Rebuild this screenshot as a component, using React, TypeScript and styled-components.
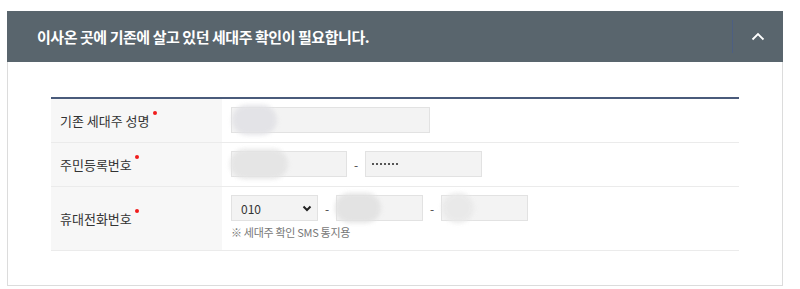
import styled, { createGlobalStyle } from "styled-components";

const GlobalStyle = createGlobalStyle`
  html, body {
    margin: 0;
    padding: 0;
    background: #fff;
    font-family: "Noto Sans CJK KR", "Noto Sans", sans-serif;
  }
`;

const Panel = styled.section`
  margin: 11px 0 0 7px;
  width: 776px;
  border: 1px solid #dcdcdc;
  border-top: 0;
  box-sizing: border-box;
  background: #fff;
`;

const Header = styled.header`
  height: 51px;
  background: #59656d;
  display: flex;
  align-items: center;
  padding-left: 30px;
  margin: 0 -1px;
`;

const Title = styled.h2`
  flex: 1;
  margin: 0;
  color: #fff;
  font-size: 15px;
  font-weight: 700;
  letter-spacing: -0.45px;
`;

const Toggle = styled.button`
  width: 50px;
  height: 33px;
  border: 0;
  border-left: 1px solid #4c5f82;
  background: transparent;
  display: flex;
  align-items: center;
  justify-content: center;
  padding: 0;
  margin-right: 1px;
  cursor: pointer;
`;

const Body = styled.div`
  padding: 35px 43px 34px 43px;
`;

const Table = styled.div`
  border-top: 2px solid #4a5b7b;
`;

const Row = styled.div<{ $h: number }>`
  display: grid;
  grid-template-columns: 171px 1fr;
  height: ${({ $h }) => $h}px;
  box-sizing: border-box;
  border-bottom: 1px solid #ebebeb;
`;

const Label = styled.div`
  background: #f7f7f7;
  display: flex;
  align-items: center;
  padding-left: 9px;
  font-size: 13px;
  color: #333;
`;

const Req = styled.span`
  display: inline-block;
  width: 4px;
  height: 4px;
  border-radius: 50%;
  background: #f01c1c;
  margin-left: 3px;
  position: relative;
  top: -8px;
`;

const Cell = styled.div`
  padding: 8px 0 0 9px;
`;

const Line = styled.div`
  display: flex;
  align-items: center;
`;

const Field = styled.div<{ $w: number }>`
  position: relative;
  width: ${({ $w }) => $w}px;
  height: 26px;
  box-sizing: border-box;
  background: #f3f3f3;
  border: 1px solid #e2e2e2;
  font-size: 12px;
  color: #333;
  display: flex;
  align-items: center;
  padding-left: 9px;
`;

const Dots = styled.span`
  display: flex;
  gap: 1.6px;
  margin-left: -3px;
`;

const Dot = styled.i`
  width: 2.4px;
  height: 2.4px;
  border-radius: 50%;
  background: #222;
`;

const Dash = styled.span`
  width: 18px;
  text-align: center;
  font-size: 12px;
  color: #444;
`;

const Chevron = styled.svg`
  position: absolute;
  right: 5px;
  top: 9px;
`;

const Blur = styled.div<{ $l: number; $w: number; $c: string }>`
  position: absolute;
  left: ${({ $l }) => $l}px;
  top: -3px;
  width: ${({ $w }) => $w}px;
  height: 30px;
  border-radius: 15px;
  background: ${({ $c }) => $c};
  filter: blur(2px);
  opacity: 0.9;
`;

const Note = styled.p`
  margin: 3px 0 0 0;
  font-size: 11px;
  color: #777;
  letter-spacing: -0.3px;
`;

export default function App() {
  return (
    <>
      <GlobalStyle />
      <Panel>
        <Header>
          <Title>이사온 곳에 기존에 살고 있던 세대주 확인이 필요합니다.</Title>
          <Toggle aria-label="접기">
            <svg width="14" height="9" viewBox="0 0 14 9">
              <path d="M1.5 7.5 L7 2 L12.5 7.5" fill="none" stroke="#fff" strokeWidth="1.8" />
            </svg>
          </Toggle>
        </Header>
        <Body>
          <Table>
            <Row $h={44}>
              <Label>
                기존 세대주 성명
                <Req />
              </Label>
              <Cell>
                <Field $w={199}>
                  <Blur $l={0} $w={45} $c="#e2e2e6" />
                </Field>
              </Cell>
            </Row>
            <Row $h={44}>
              <Label>
                주민등록번호
                <Req />
              </Label>
              <Cell>
                <Line>
                  <Field $w={116}>
                    <Blur $l={-2} $w={58} $c="#e4e4e4" />
                  </Field>
                  <Dash>-</Dash>
                  <Field $w={117}>
                    <Dots>
                      {Array.from({ length: 7 }).map((_, i) => (
                        <Dot key={i} />
                      ))}
                    </Dots>
                  </Field>
                </Line>
              </Cell>
            </Row>
            <Row $h={64}>
              <Label>
                휴대전화번호
                <Req />
              </Label>
              <Cell>
                <Line>
                  <Field $w={87}>
                    010
                    <Chevron width="10" height="7" viewBox="0 0 10 7">
                      <path d="M1.5 1.5 L5 5 L8.5 1.5" fill="none" stroke="#222" strokeWidth="2" />
                    </Chevron>
                  </Field>
                  <Dash>-</Dash>
                  <Field $w={87}>
                    <Blur $l={-2} $w={46} $c="#e2e2e2" />
                  </Field>
                  <Dash>-</Dash>
                  <Field $w={87}>
                    <Blur $l={0} $w={32} $c="#e9e9e9" />
                  </Field>
                </Line>
                <Note>※ 세대주 확인 SMS 통지용</Note>
              </Cell>
            </Row>
          </Table>
        </Body>
      </Panel>
    </>
  );
}
